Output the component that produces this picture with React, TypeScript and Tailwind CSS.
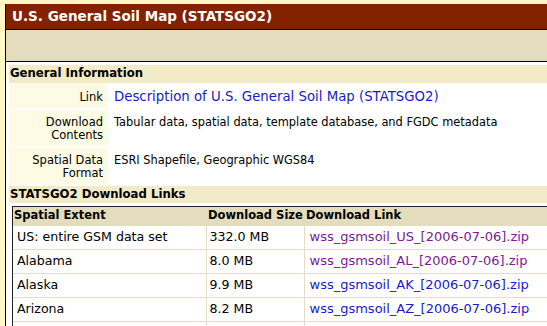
const rows = [
  { extent: 'US: entire GSM data set', size: '332.0 MB', file: 'wss_gsmsoil_US_[2006-07-06].zip', visited: true },
  { extent: 'Alabama', size: '8.0 MB', file: 'wss_gsmsoil_AL_[2006-07-06].zip', visited: true },
  { extent: 'Alaska', size: '9.9 MB', file: 'wss_gsmsoil_AK_[2006-07-06].zip', visited: false },
  { extent: 'Arizona', size: '8.2 MB', file: 'wss_gsmsoil_AZ_[2006-07-06].zip', visited: false },
]

const info = [
  { label: ['Download', 'Contents'], value: 'Tabular data, spatial data, template database, and FGDC metadata' },
  { label: ['Spatial Data', 'Format'], value: 'ESRI Shapefile, Geographic WGS84' },
]

export default function App() {
  return (
    <div className="h-[326px] w-[547px] overflow-hidden bg-[#fff7c6] pt-[4px] pl-[5px] font-['DejaVu_Sans',Verdana,sans-serif] text-black">
      <div className="h-full w-[600px] border-l border-black bg-white">
        <div className="flex h-[26px] items-center border-b border-black bg-[#842200] px-[6px]">
          <h1 className="text-[13.5px] font-bold leading-none text-white">
            U.S. General Soil Map (STATSGO2)
          </h1>
        </div>
        <div className="h-[32px] border-b border-black bg-[#e3dcbd]" />

        <div className="px-[3px] pt-[3px]">
          <div className="flex h-[18px] items-center bg-[#f3eac8] px-[1px] text-[11.7px] font-bold">
            General Information
          </div>

          <div className="flex flex-col gap-[2px]">
            <div className="flex h-[25px]">
              <div className="w-[99px] shrink-0 bg-[#fdfbe3] px-[5px] pt-[8px] text-right text-[11.5px] leading-[13px]">
                Link
              </div>
              <div className="pl-[6px] pt-[7px] text-[13.3px] leading-[14px] text-[#1a1acc]">
                Description of U.S. General Soil Map (STATSGO2)
              </div>
            </div>
            {info.map(({ label, value }) => (
              <div key={value} className="flex h-[36px]">
                <div className="w-[99px] shrink-0 bg-[#fdfbe3] px-[5px] pt-[6px] text-right text-[11.5px] leading-[13px]">
                  {label.map((line) => (
                    <div key={line}>{line}</div>
                  ))}
                </div>
                <div className="pl-[6px] pt-[6px] text-[11.4px] leading-[13px]">{value}</div>
              </div>
            ))}
          </div>

          <div className="mt-[2px] flex h-[17px] items-center bg-[#f3eac8] px-[1px] text-[11.7px] font-bold">
            STATSGO2 Download Links
          </div>

          <div className="ml-[3px] mt-[3px] border border-[#222]">
            <table className="w-full table-fixed border-collapse text-[12.6px]">
              <thead>
                <tr className="h-[18px] bg-[#e3dcbd] text-left text-[11.5px] font-bold whitespace-nowrap">
                  <th className="w-[193px] px-[1px]">Spatial Extent</th>
                  <th className="w-[98px] px-[2px]">Download Size</th>
                  <th className="px-[2px]">Download Link</th>
                </tr>
              </thead>
              <tbody>
                {rows.map((row) => (
                  <tr key={row.file} className="h-[24px] border-t border-[#e6ddbf] whitespace-nowrap">
                    <td className="px-[4px]">{row.extent}</td>
                    <td className="border-l border-[#e6ddbf] px-[3px]">{row.size}</td>
                    <td
                      className={`border-l border-[#e6ddbf] px-[5px] text-[13px] ${
                        row.visited ? 'text-[#7a1a9a]' : 'text-[#1a1acc]'
                      }`}
                    >
                      {row.file}
                    </td>
                  </tr>
                ))}
                <tr className="h-[24px] border-t border-[#e6ddbf]">
                  <td />
                  <td className="border-l border-[#e6ddbf]" />
                  <td className="border-l border-[#e6ddbf]" />
                </tr>
              </tbody>
            </table>
          </div>
        </div>
      </div>
    </div>
  )
}
